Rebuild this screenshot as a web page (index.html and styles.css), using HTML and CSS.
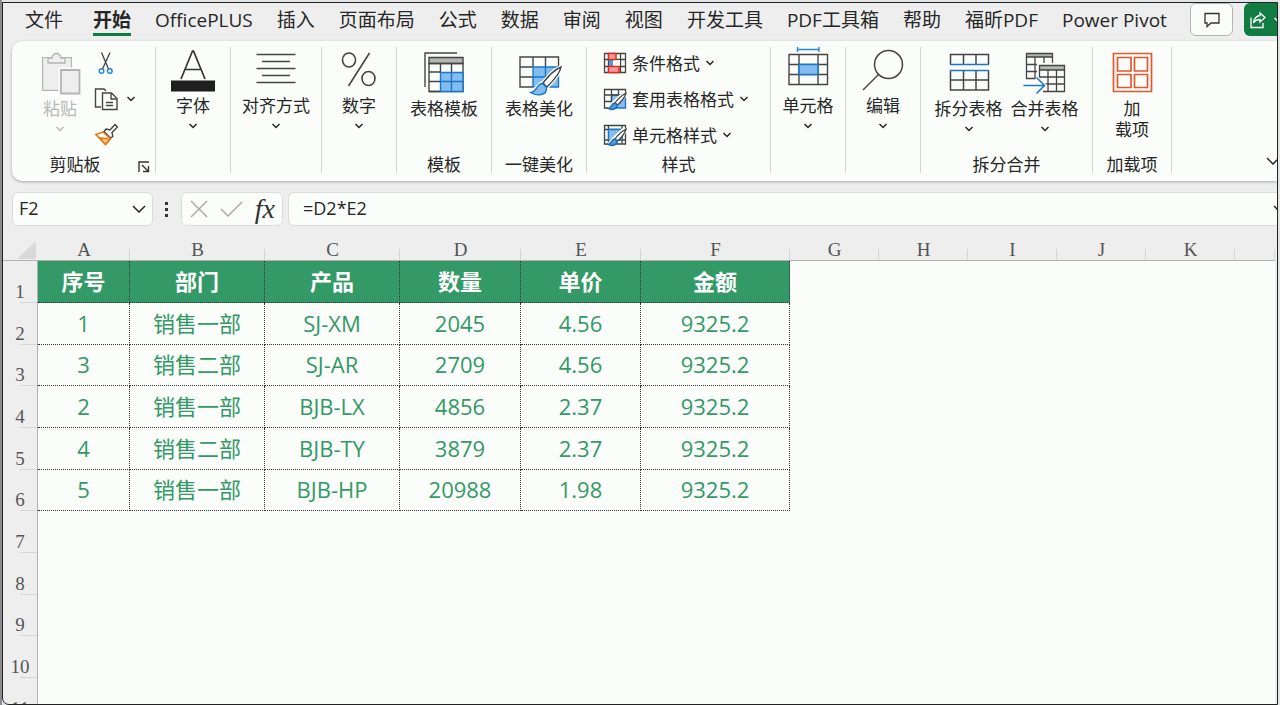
FILE: index.html
```html
<!DOCTYPE html>
<html lang="zh-CN">
<head>
  <meta charset="UTF-8" />
  <meta name="viewport" content="width=device-width, initial-scale=1">
  <title>Excel</title>
  <link rel="stylesheet" href="styles.css">
</head>
<body>

  <!-- shared symbols -->
  <svg class="defs" aria-hidden="true">
    <symbol id="chev" viewBox="0 0 10 6"><path d="M1.500 1l3.500 3.500L8.500 1" fill="none" stroke="currentColor" stroke-width="1.500"/></symbol>
    <symbol id="chev-lg" viewBox="0 0 14 8"><path d="M1 1l6 6 6-6" fill="none" stroke="currentColor" stroke-width="1.500"/></symbol>
  </svg>

  <div class="window">
    <header class="tabbar">
      <nav class="tabs">
        <a href="#" class="file">文件</a>
        <a href="#" class="active">开始</a>
        <a href="#">OfficePLUS</a>
        <a href="#">插入</a>
        <a href="#">页面布局</a>
        <a href="#">公式</a>
        <a href="#">数据</a>
        <a href="#">审阅</a>
        <a href="#">视图</a>
        <a href="#">开发工具</a>
        <a href="#">PDF工具箱</a>
        <a href="#">帮助</a>
        <a href="#">福昕PDF</a>
        <a href="#">Power Pivot</a>
      </nav>
      <button class="comment" aria-label="批注">
        <svg width="18" height="18" viewBox="0 0 18 18" fill="none" stroke="#333" stroke-width="1.300"><path d="M2 2.500h14v9.500H8l-4 3.500V12H2z"/></svg>
      </button>
      <button class="share" aria-label="共享">
        <svg width="18" height="18" viewBox="0 0 18 18" fill="none" stroke="#fff" stroke-width="1.300"><path d="M2 6.500v10h12v-4.500M11 2l5 4.500-5 4.500V8.500c-3 0-5 .8-6.500 3.500C5 8 7 5 11 4.500z"/></svg>
        <svg width="10" height="6"><use href="#chev"/></svg>
      </button>
    </header>

    <section class="ribbon">
      <div class="group clipboard">
        <div class="tools">
          <button class="big paste" disabled>
            <svg class="icon tall" viewBox="0 0 48 50" fill="#eee" stroke="#b4b4b4" stroke-width="1.300">
              <path d="M7.500 11.500h27v31h-27z" stroke-width="3"/>
              <path d="M7.500 11.500h27v31h-27z" stroke="#e4e4e4" stroke-width="1"/>
              <path d="M12 16v-5h4c1-6 8-6 9 0h4v5z"/>
              <path d="M22.500 20.500h22v28h-22z" fill="#fbfdfa" stroke="none"/>
              <path d="M25 23h18.500v23.500H25z" stroke-width="1.800"/>
            </svg>
            <span>粘贴</span>
            <svg class="chev"><use href="#chev"/></svg>
          </button>
          <div class="stack">
            <button class="row" aria-label="剪切">
              <svg width="24" height="24" viewBox="0 0 24 24" fill="none" stroke="#444" stroke-width="1.300"><path d="M7.500 1.500L14.500 18M16 1.500L8.500 18"/><g stroke="#2488d8" stroke-width="1.500"><circle cx="7.500" cy="20" r="2.300"/><circle cx="15.800" cy="20" r="2.300"/></g></svg>
            </button>
            <button class="row" aria-label="复制">
              <svg width="24" height="24" viewBox="0 0 24 24" fill="none" stroke="#444" stroke-width="1.400"><path d="M7 20H1.500V2H10l2 2"/><path d="M8.500 6h9l5.500 5.500v11H8.500z" fill="#fff"/><path d="M17 6v6h6M12 15.500h7M12 18.500h7"/></svg>
              <svg class="chev"><use href="#chev"/></svg>
            </button>
            <button class="row" aria-label="格式刷">
              <svg width="24" height="24" viewBox="0 0 24 24" fill="#fff" stroke="#444" stroke-width="1.400"><path d="M12 6l4 1 5-5.500 2.500 2.500-5.500 5.500.8 4-2.300 1.500-6.500-6.500z"/><path d="M9 9l7.500 7-5 5.500L2 11.500z" fill="#fff" stroke="#e8780c" stroke-width="1.600"/><path d="M6 15l7 .5 2 1.500-3.500 4.500z" fill="#fbc98c" stroke="#e8780c"/></svg>
            </button>
          </div>
        </div>
        <div class="label">
          <span>剪贴板</span>
          <button class="launcher" aria-label="剪贴板设置"><svg width="12" height="12" viewBox="0 0 12 12" fill="none" stroke="#333" stroke-width="1.400"><path d="M1 11V1h10M4 4l6 6M10.500 5v5.500H5"/></svg></button>
        </div>
      </div>

      <div class="group w-s">
        <div class="tools">
          <button class="big">
            <svg class="icon" viewBox="0 0 48 48"><path d="M12 32L23.500 4h1L36 32M16 22.500h16" fill="none" stroke="#333" stroke-width="1.700"/><path d="M2 33.500h44v11H2z" fill="#1f1f1f"/></svg>
            <span>字体</span>
            <svg class="chev"><use href="#chev"/></svg>
          </button>
        </div>
      </div>

      <div class="group w-align">
        <div class="tools">
          <button class="big">
            <svg class="icon" viewBox="0 0 48 48"><path d="M4.500 7.500h39M10 14.500h28M4.500 21.500h39M10 28.500h28M4.500 35.500h39" stroke="#444" stroke-width="1.400"/></svg>
            <span>对齐方式</span>
            <svg class="chev"><use href="#chev"/></svg>
          </button>
        </div>
      </div>

      <div class="group w-s">
        <div class="tools">
          <button class="big">
            <svg class="icon" viewBox="0 0 48 48" fill="none" stroke="#444" stroke-width="1.600"><ellipse cx="14" cy="13" rx="6.500" ry="7"/><ellipse cx="33.500" cy="31.500" rx="6.500" ry="7"/><path d="M34.500 6L13.500 39"/></svg>
            <span>数字</span>
            <svg class="chev"><use href="#chev"/></svg>
          </button>
        </div>
      </div>

      <div class="group w-tpl">
        <div class="tools">
          <button class="big">
            <svg class="icon tall" viewBox="0 0 48 50" fill="none" stroke="#444" stroke-width="1.400"><path d="M5 40V6h32"/><path d="M9 10.500h34v6H9z" fill="#b5b5b5"/><path d="M9 16.500h34v28H9z"/><path d="M20 25h23v19.500H20z" fill="#83bdf0" stroke="none"/><path d="M20.500 16.500V25M31.500 16.500V25M9 25h11M9 34.500h11M20 44.500h-11"/><path d="M20.500 25.500H43v19H20.500zM31.500 25v19.500M20 34.500h23" stroke="#1a76c8"/></svg>
            <span>表格模板</span>
          </button>
        </div>
        <div class="label">模板</div>
      </div>

      <div class="group w-tpl">
        <div class="tools">
          <button class="big">
            <svg class="icon tall" viewBox="0 0 48 50" fill="none" stroke="#444" stroke-width="1.400"><path d="M18 20h25.500v20H18z" fill="#83bdf0" stroke="none"/><path d="M43.500 20V10H5v30h13M18 10v10M30.500 10v10M5 20h13M5 30h13"/><path d="M18 40V20h25.500v20H18M30.500 20v20M18 30h25.500" stroke="#1a76c8"/><path d="M46 20c-7 3-15 12-18 16-5 0-6 8-13 9 6 5 17 4 17-5 5-5 13-13 14-20z" stroke="#fff" stroke-width="4" fill="#fff"/><path d="M46 20c-7 3-15 12-18 16l4 4c5-5 13-13 14-20z" fill="#fff"/><path d="M27.500 36.500c-6 0-5 8-12 9 6 4 17 3 16-5z" fill="#83bdf0" stroke="#1a76c8"/></svg>
            <span>表格美化</span>
          </button>
        </div>
        <div class="label">一键美化</div>
      </div>

      <div class="group w-style">
        <div class="tools">
          <div class="stack">
            <button class="row">
              <svg width="24" height="24" viewBox="0 0 24 24" fill="none" stroke="#444" stroke-width="1.300"><path d="M1.500 2.500h21v19h-21zM5.500 2.500v19M17.500 2.500v19M1.500 8.500h21M1.500 15.500h21"/><path d="M10.500 9h6.500v6h-6.500z" fill="#fbfdfa" stroke="none"/><path d="M6 9h4v6H6z" fill="#4a9be0" stroke="none"/><path d="M5.500 2.500h7.500v6H5.500zM5.500 15.500h10.500v6H5.500z" fill="#f99" stroke="#e02b20" stroke-width="1.500"/></svg>
              <span>条件格式</span>
              <svg class="chev"><use href="#chev"/></svg>
            </button>
            <button class="row">
              <svg width="24" height="24" viewBox="0 0 24 24" fill="none" stroke="#444" stroke-width="1.300"><path d="M8.500 8h14v13h-14z" fill="#83bdf0" stroke="#1a76c8"/><path d="M22.500 8V2.500h-21v18.500h6M8.500 2.500V21M15.500 2.500V8M1.500 8h21M1.500 14.500h7"/><path d="M23 6L10 18l-3 4" stroke="#fff" stroke-width="6"/><path d="M23 6c-5 3-9 7-11 10l2.500 2C18 15 22 10 23 6z" fill="#fff"/><path d="M12 16c-4 0-3 5-7 5.500 4 2 9 1 9.500-3.500z" fill="#4a9be0" stroke="#1a66b0"/></svg>
              <span>套用表格格式</span>
              <svg class="chev"><use href="#chev"/></svg>
            </button>
            <button class="row">
              <svg width="24" height="24" viewBox="0 0 24 24" fill="none" stroke="#444" stroke-width="1.300"><path d="M1.500 2.500h21v18.500h-21zM5.500 2.500V21M19 2.500V21M1.500 6.500h21M1.500 17h21"/><path d="M5.500 6.500H19V17H5.500z" fill="#83bdf0" stroke="#1a76c8"/><path d="M23 6L10 18l-3 4" stroke="#fff" stroke-width="6"/><path d="M23 6c-5 3-9 7-11 10l2.500 2C18 15 22 10 23 6z" fill="#fff"/><path d="M12 16c-4 0-3 5-7 5.500 4 2 9 1 9.500-3.500z" fill="#4a9be0" stroke="#1a66b0"/></svg>
              <span>单元格样式</span>
              <svg class="chev"><use href="#chev"/></svg>
            </button>
          </div>
        </div>
        <div class="label">样式</div>
      </div>

      <div class="group w-s">
        <div class="tools">
          <button class="big">
            <svg class="icon" viewBox="0 0 48 48" fill="none" stroke="#444" stroke-width="1.400"><path d="M5 7.500h38.500v30H5zM15 7.500v30M34 7.500v30M5 17.500h38.500M5 27.500h38.500"/><path d="M15 17.500h19v10H15z" fill="#83bdf0" stroke="#1a76c8" stroke-width="1.600"/><path d="M13.500 2.500H35M13.500 0v5M35 0v5" stroke="#2488d8"/></svg>
            <span>单元格</span>
            <svg class="chev"><use href="#chev"/></svg>
          </button>
        </div>
      </div>

      <div class="group w-s">
        <div class="tools">
          <button class="big">
            <svg class="icon" viewBox="0 0 48 48" fill="none" stroke="#444" stroke-width="1.500"><circle cx="29.500" cy="17.500" r="14"/><path d="M19.500 27.500L4 43"/></svg>
            <span>编辑</span>
            <svg class="chev"><use href="#chev"/></svg>
          </button>
        </div>
      </div>

      <div class="group w-split">
        <div class="tools">
          <button class="big">
            <svg class="icon tall" viewBox="0 0 48 50" fill="none" stroke="#444" stroke-width="1.500"><path d="M5.500 17.500v-10h38v10M18.500 7.500v10M31 7.500v10M5.500 23v20h38V23M18.500 23v20M31 23v20M5.500 33h38"/><path d="M5 17.500h39M5 23.500h39" stroke="#1a76c8"/></svg>
            <span>拆分表格</span>
            <svg class="chev"><use href="#chev"/></svg>
          </button>
          <button class="big">
            <svg class="icon tall" viewBox="0 0 48 50" fill="none" stroke="#444" stroke-width="1.300"><path d="M5.500 6.500h26V10h-26z" fill="#b5b5b5"/><path d="M31.500 10v6M5.500 10v21.500h10M14 10v21.500M23 10v6M5.500 17.500H16M5.500 24.500H16"/><path d="M18.500 18.500h25V23h-25z" fill="#b5b5b5"/><path d="M18.500 23v9M43.500 23v21.500H22M27 23v21.500M35.500 23v21.500M18.500 30h25M24 37h19.500"/><path d="M2.500 38.500h21M15.500 30.500l8 8-8 8" stroke="#fbfdfa" stroke-width="4"/><path d="M2.500 38.500h21M15.500 30.500l8 8-8 8" stroke="#1a76c8" stroke-width="1.500"/></svg>
            <span>合并表格</span>
            <svg class="chev"><use href="#chev"/></svg>
          </button>
        </div>
        <div class="label">拆分合并</div>
      </div>

      <div class="group w-addin">
        <div class="tools">
          <button class="big">
            <svg class="icon tall" viewBox="0 0 48 50" fill="none" stroke="#e2582c" stroke-width="1.700"><path d="M5.500 6.500h38v38h-38zM9.500 10.500h13.500v13.500H9.500zM26.500 10.500h13v13.500h-13zM9.500 27.500h13.500v13H9.500zM26.500 27.500h13v13h-13z"/></svg>
            <span>加<br>载项</span>
          </button>
        </div>
        <div class="label">加载项</div>
      </div>

      <button class="collapse" aria-label="折叠功能区"><svg width="14" height="8"><use href="#chev-lg"/></svg></button>
    </section>

    <section class="formulabar">
      <div class="box namebox">
        <input type="text" value="F2" aria-label="名称框">
        <button aria-label="名称列表"><svg width="14" height="8"><use href="#chev-lg"/></svg></button>
      </div>
      <svg class="dots" width="4" height="16" fill="#333"><path d="M0 1h3v3H0zM0 7h3v3H0zM0 13h3v3H0z"/></svg>
      <div class="box actions">
        <button aria-label="取消"><svg width="20" height="20" viewBox="0 0 20 20" fill="none" stroke="#aaa" stroke-width="1.500"><path d="M2 2l16 16M18 2L2 18"/></svg></button>
        <button aria-label="输入"><svg width="24" height="20" viewBox="0 0 24 20" fill="none" stroke="#aaa" stroke-width="1.500"><path d="M1 10l7 7L22 3"/></svg></button>
        <button class="fx">fx</button>
      </div>
      <div class="box formula">
        <input type="text" value="=D2*E2" aria-label="编辑栏">
        <button class="expand" aria-label="展开编辑栏"><svg width="14" height="8"><use href="#chev-lg"/></svg></button>
      </div>
    </section>

    <main class="sheet">
      <table>
        <colgroup>
          <col class="c-row"><col class="c-a"><col class="c-b"><col class="c-c"><col class="c-d"><col class="c-e"><col class="c-f">
          <col class="c-std"><col class="c-std"><col class="c-std"><col class="c-std"><col class="c-std"><col>
        </colgroup>
        <thead>
          <tr><th class="corner"><svg width="19" height="18"><path d="M19 0v18H0z" fill="#d9d9d9"/></svg></th><th>A</th><th>B</th><th>C</th><th>D</th><th>E</th><th>F</th><th>G</th><th>H</th><th>I</th><th>J</th><th>K</th><th></th></tr>
        </thead>
        <tbody>
          <tr class="title"><th>1</th><td>序号</td><td>部门</td><td>产品</td><td>数量</td><td>单价</td><td>金额</td><td colspan="6"></td></tr>
          <tr class="data"><th>2</th><td>1</td><td>销售一部</td><td>SJ-XM</td><td>2045</td><td>4.56</td><td>9325.2</td><td colspan="6"></td></tr>
          <tr class="data"><th>3</th><td>3</td><td>销售二部</td><td>SJ-AR</td><td>2709</td><td>4.56</td><td>9325.2</td><td colspan="6"></td></tr>
          <tr class="data"><th>4</th><td>2</td><td>销售一部</td><td>BJB-LX</td><td>4856</td><td>2.37</td><td>9325.2</td><td colspan="6"></td></tr>
          <tr class="data"><th>5</th><td>4</td><td>销售二部</td><td>BJB-TY</td><td>3879</td><td>2.37</td><td>9325.2</td><td colspan="6"></td></tr>
          <tr class="data"><th>6</th><td>5</td><td>销售一部</td><td>BJB-HP</td><td>20988</td><td>1.98</td><td>9325.2</td><td colspan="6"></td></tr>
          <tr><th>7</th><td colspan="12"></td></tr>
          <tr><th>8</th><td colspan="12"></td></tr>
          <tr><th>9</th><td colspan="12"></td></tr>
          <tr><th>10</th><td colspan="12"></td></tr>
          <tr><th>11</th><td colspan="12"></td></tr>
        </tbody>
      </table>
    </main>
  </div>

</body>
</html>
```
FILE: styles.css
```css
:root {
  --chrome: #eeeeee;
  --paper: #fbfdfa;
  --green: #339966;
  --excel: #107c41;
  --line: #d4d6d4;
  --text: #262626;
}
* { box-sizing: border-box; }
body {
  margin: 0;
  height: 100vh;
  padding: 2px 2px 0 0;
  border-left: 2px solid #8c8c8c;
  background: #e2e5e5;
  color: var(--text);
  font-family: "Open Sans", "Noto Sans CJK SC", sans-serif;
  overflow: hidden;
}
button {
  border: none;
  background: none;
  padding: 0;
  font: inherit;
  color: inherit;
}
svg { display: block; flex: none; }
.defs { position: absolute; width: 0; height: 0; }
.window {
  height: 100%;
  display: flex;
  flex-direction: column;
  background: var(--chrome);
  border: 1px solid #222;
  border-radius: 0 0 0 7px;
  overflow: hidden;
}

/* tabs */
.tabbar {
  display: flex;
  height: 38px;
  flex: none;
}
.tabs {
  flex: 1;
  display: flex;
  gap: 24px;
  padding-left: 22px;
  font-size: 19px;
  line-height: 30px;
  white-space: nowrap;
}
.tabs a {
  color: inherit;
  text-decoration: none;
  height: 33px;
  padding-top: 2px;
}
.tabs .file { margin-right: 6px; }
.tabs .active {
  font-weight: bold;
  border-bottom: 3px solid var(--excel);
}
.comment, .share {
  flex: none;
  height: 33px;
  display: flex;
  align-items: center;
}
.comment {
  width: 43px;
  justify-content: center;
  background: var(--paper);
  border: 1px solid #b4b4b4;
  border-radius: 6px;
  margin-right: 11px;
}
.share {
  width: 33px;
  padding-left: 5px;
  gap: 6px;
  background: var(--excel);
  color: white;
  border-radius: 6px 0 0 6px;
  overflow: hidden;
}

/* ribbon */
.ribbon {
  flex: none;
  display: flex;
  height: 140px;
  margin-left: 9px;
  padding: 6px 0 8px;
  background: var(--paper);
  border-radius: 10px 0 0 10px;
  box-shadow: 0 1px 3px rgba(0,0,0,0.3);
  font-size: 17px;
  line-height: 21px;
}
.group {
  flex: none;
  display: flex;
  flex-direction: column;
  justify-content: space-between;
  border-right: 1px solid var(--line);
}
.clipboard { width: 144px; }
.w-s { width: 75px; }
.w-align { width: 91px; }
.w-tpl { width: 95px; }
.w-style { width: 184px; }
.w-split { width: 172px; }
.w-addin { width: 79px; }
.tools {
  display: flex;
  justify-content: center;
}
.label {
  display: flex;
  justify-content: center;
  align-items: flex-end;
  line-height: 16px;
}
.label span { flex: 1; text-align: center; }
.launcher { margin-right: 5px; }
.big {
  display: flex;
  flex-direction: column;
  align-items: center;
  width: 76px;
  white-space: nowrap;
}
.icon { width: 48px; height: 48px; }
.icon.tall { height: 50px; margin-bottom: 1px; }
.chev { width: 10px; height: 6px; }
.big .chev { margin-top: 7px; }
.paste {
  width: 48px;
  color: #b8b8b8;
}
.clipboard .tools {
  justify-content: flex-start;
  padding-left: 24px;
  gap: 10px;
}
.stack {
  display: flex;
  flex-direction: column;
  gap: 4px;
}
.row {
  display: flex;
  align-items: center;
  gap: 5px;
  height: 32px;
}
.clipboard .row { gap: 8px; }
.w-style .tools {
  justify-content: flex-start;
  padding-left: 16px;
}
.collapse {
  align-self: flex-end;
  margin: 0 -3px 8px auto;
}

/* formula bar */
.formulabar {
  flex: none;
  display: flex;
  align-items: center;
  margin: 11px 0 11px 9px;
  height: 34px;
  font-size: 18px;
}
.box {
  display: flex;
  align-items: center;
  height: 34px;
  background: var(--paper);
  border: 1px solid #dadcda;
  border-radius: 6px;
}
.box input {
  flex: 1;
  min-width: 0;
  border: none;
  background: none;
  outline: none;
  padding: 0 0 2px;
  font: inherit;
  color: inherit;
}
.namebox {
  width: 141px;
  padding: 0 6px;
}
.dots { margin: 0 12px; }
.actions {
  width: 102px;
  padding: 0 7px;
  justify-content: space-between;
  margin-right: 5px;
}
.fx {
  font: italic 28px/30px "Liberation Serif", serif;
  color: #333;
}
.formula {
  flex: 1;
  padding-left: 14px;
  border-right: none;
  border-radius: 6px 0 0 6px;
}
.expand { margin-right: -10px; }

/* sheet */
.sheet {
  flex: 1;
  min-height: 0;
  overflow: hidden;
  margin-right: 2px;
}
table {
  width: 100%;
  table-layout: fixed;
  border-collapse: separate;
  border-spacing: 0;
}
.c-row { width: 35px; }
.c-a { width: 92px; }
.c-b { width: 135px; }
.c-c { width: 135px; }
.c-d { width: 121px; }
.c-e { width: 120px; }
.c-f { width: 149px; }
.c-std { width: 89px; }
th, td {
  padding: 0;
  text-align: center;
}
th {
  font: 19px/22px "Liberation Serif", serif;
  color: #555;
}
thead th {
  height: 24px;
  padding-top: 2px;
  line-height: 21px;
  border-bottom: 1px solid #b5b0b0;
  background: linear-gradient(var(--line), var(--line)) right bottom / 1px 11px no-repeat;
}
thead .corner {
  background: none;
  padding-left: 14px;
}
tbody tr { height: 42px; }
tbody tr:nth-child(3n) { height: 41px; }
tbody th {
  vertical-align: bottom;
  border-right: 1px solid #b0b0b0;
  background: linear-gradient(var(--line), var(--line)) right bottom / 17px 1px no-repeat;
}
td {
  background: var(--paper);
  padding-bottom: 2px;
  font-size: 22px;
  line-height: 30px;
}
.title td, .data td {
  border-right: 1px dotted #333;
  border-bottom: 1px dotted #333;
}
.title td {
  background: var(--green);
  color: white;
  font-weight: bold;
}
.data td { color: var(--green); }
.title td:last-child, .data td:last-child {
  background: var(--paper);
  border: none;
}
```
